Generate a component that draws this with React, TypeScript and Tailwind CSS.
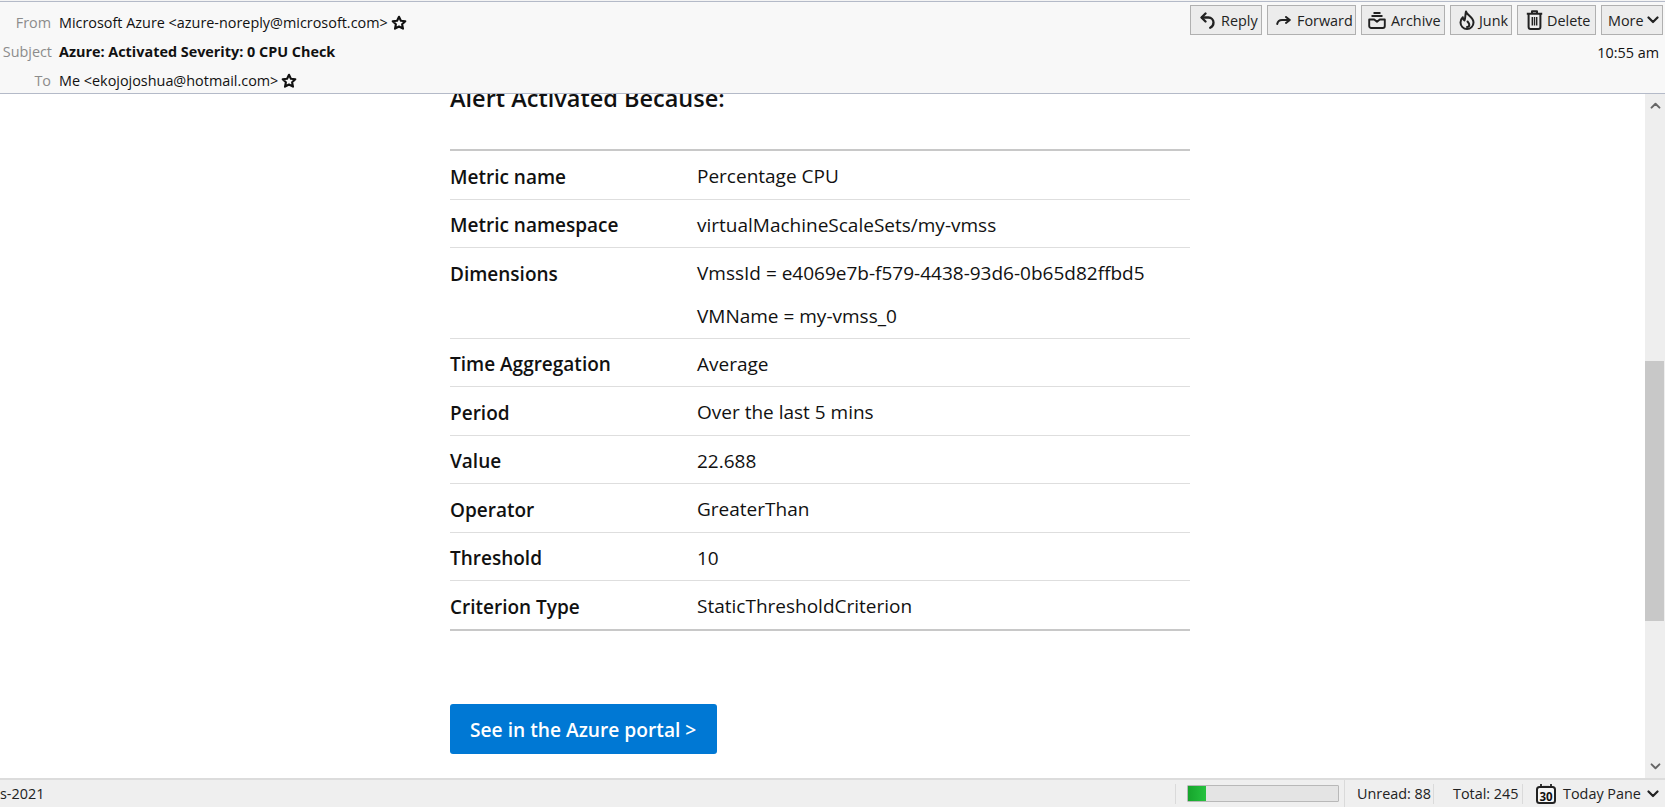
import type { ReactNode } from "react";

const ui = "font-['Open_Sans','Noto_Sans',sans-serif]";

function Star() {
  return (
    <svg viewBox="0 0 16 16" className="w-[16px] h-[16px] shrink-0" fill="none" stroke="#111" strokeWidth="2.1" strokeLinejoin="round">
      <path d="M8 1.800l1.900 4 4.400.5-3.200 3 .9 4.400L8 11.500l-4 2.200.9-4.400-3.200-3 4.400-.5z" />
    </svg>
  );
}

function Chevron({ up, className }: { up?: boolean; className: string }) {
  return (
    <svg viewBox="0 0 12 8" className={className} fill="none" stroke="currentColor" strokeWidth="2.200" strokeLinecap="round" strokeLinejoin="round">
      <path d={up ? "M1.500 6.500 6 2l4.500 4.500" : "M1.500 1.500 6 6l4.500-4.500"} />
    </svg>
  );
}

function ReplyIcon() {
  return (
    <svg viewBox="0 0 15 17" className="w-[15px] h-[17px]" fill="none" stroke="#222" strokeWidth="2.300" strokeLinecap="round" strokeLinejoin="round">
      <path d="M5.500 1.500 1.500 5.500l4 4" />
      <path d="M2 5.500h6.500a5 5 0 0 1 5 5c0 2.500-1.200 4.300-3.300 5.200" />
    </svg>
  );
}

function ForwardIcon() {
  return (
    <svg viewBox="0 0 15 9" className="w-[15px] h-[9px]" fill="none" stroke="#222" strokeWidth="2" strokeLinecap="round" strokeLinejoin="round">
      <path d="M10 1l3.800 3L10 7" />
      <path d="M13 4H6C3.500 4 1.700 5.500 1.200 8" />
    </svg>
  );
}

function ArchiveIcon() {
  return (
    <svg viewBox="0 0 18 17" className="w-[18px] h-[17px]" fill="none" stroke="#222" strokeWidth="1.900" strokeLinejoin="round">
      <path d="M5.500 1h7M3.500 4h11" />
      <path d="M1.200 7.500h5L9 9.800l2.800-2.300h5v6.500a2 2 0 0 1-2 2H3.200a2 2 0 0 1-2-2z" />
    </svg>
  );
}

function JunkIcon() {
  return (
    <svg viewBox="0 0 16 20" className="w-[16px] h-[20px]" fill="none" stroke="#222" strokeWidth="2" strokeLinejoin="round" strokeLinecap="round">
      <path d="M7 1.500c.5 3.500 7.500 5.500 7.500 11a6.500 6.500 0 0 1-13 0c0-2.300 1-4 2.300-5.200.1 1.500.7 2.500 1.700 3.200C6.500 8 6.200 4.500 7 1.500z" />
      <path d="M8.500 11.500c1 1.200 1.800 2.200 1.800 3.200 0 1.400-1 2.300-2.300 2.300" />
    </svg>
  );
}

function TrashIcon() {
  return (
    <svg viewBox="0 0 17 20" className="w-[17px] h-[20px]" fill="none" stroke="#222" strokeWidth="2" strokeLinejoin="round">
      <path d="M6 3V1.200h5V3M.8 3.800h15.400" />
      <path d="M2.600 4v13a2 2 0 0 0 2 2h7.800a2 2 0 0 0 2-2V4" />
      <path d="M6.300 7v8.500M8.500 7v8.500M10.700 7v8.500" strokeWidth="1.400" />
    </svg>
  );
}

function CalendarIcon() {
  return (
    <svg viewBox="0 0 20 20" className="w-[20px] h-[20px] shrink-0">
      <rect x="1" y="3" width="18" height="16" rx="2.500" fill="#f6f6f6" stroke="#222" strokeWidth="2" />
      <path d="M5 0v4M15 0v4" stroke="#222" strokeWidth="1.800" />
      <path d="M7 2.500h6" stroke="#222" strokeWidth="1.200" />
      <text x="10" y="16.500" textAnchor="middle" fontSize="11.500" fontWeight="700" fill="#111" fontFamily="Open Sans, sans-serif">30</text>
    </svg>
  );
}

function ToolButton({ icon, label, className }: { icon?: ReactNode; label: string; className: string }) {
  return (
    <button className={`h-[30px] flex items-center bg-[#ececec] border border-[#b0b0b0] text-[14.400px] leading-[30px] text-[#222] ${className}`}>
      {icon}
      <span className="mt-[1px]">{label}</span>
    </button>
  );
}

const rows: { name: string; values: string[] }[] = [
  { name: "Metric name", values: ["Percentage CPU"] },
  { name: "Metric namespace", values: ["virtualMachineScaleSets/my-vmss"] },
  { name: "Dimensions", values: ["VmssId = e4069e7b-f579-4438-93d6-0b65d82ffbd5", "VMName = my-vmss_0"] },
  { name: "Time Aggregation", values: ["Average"] },
  { name: "Period", values: ["Over the last 5 mins"] },
  { name: "Value", values: ["22.688"] },
  { name: "Operator", values: ["GreaterThan"] },
  { name: "Threshold", values: ["10"] },
  { name: "Criterion Type", values: ["StaticThresholdCriterion"] },
];

export default function App() {
  return (
    <div className={`h-[807px] w-[1665px] flex flex-col overflow-hidden bg-white text-[#111] ${ui}`}>
      {/* Message header */}
      <div className="h-[1px] shrink-0 bg-[#f4f4f4]" />
      <header className="relative z-10 h-[93px] shrink-0 bg-[#f8f8f8] border-t border-b border-[#b4bac8] flex justify-between">
        <div className="pt-[6px] text-[14.400px] leading-[29px]">
          <div className="flex items-center h-[29px]">
            <span className="w-[51px] text-right text-[#8c8c8c]">From</span>
            <span className="ml-[8px]">Microsoft Azure &lt;azure-noreply@microsoft.com&gt;</span>
            <span className="ml-[3px]"><Star /></span>
          </div>
          <div className="flex items-center h-[29px]">
            <span className="w-[52px] text-right text-[#8c8c8c]">Subject</span>
            <span className="ml-[7px] font-bold">Azure: Activated Severity: 0 CPU Check</span>
          </div>
          <div className="flex items-center h-[29px]">
            <span className="w-[51px] text-right text-[#8c8c8c]">To</span>
            <span className="ml-[8px]">Me &lt;ekojojoshua@hotmail.com&gt;</span>
            <span className="ml-[3px]"><Star /></span>
          </div>
        </div>
        <div className="flex flex-col items-end pr-[2px] pt-[3px]">
          <div className="flex gap-[5px]">
            <ToolButton icon={<ReplyIcon />} label="Reply" className="w-[72px] pl-[9px] gap-[6px]" />
            <ToolButton icon={<ForwardIcon />} label="Forward" className="w-[89px] pl-[8px] gap-[6px]" />
            <ToolButton icon={<ArchiveIcon />} label="Archive" className="w-[84px] pl-[6px] gap-[5px]" />
            <ToolButton icon={<JunkIcon />} label="Junk" className="w-[62px] pl-[8px] gap-[4px]" />
            <ToolButton icon={<TrashIcon />} label="Delete" className="w-[79px] pl-[8px] gap-[4px]" />
            <ToolButton
              icon={<Chevron className="order-last w-[12px] h-[8px] ml-[3px]" />}
              label="More"
              className="w-[62px] pl-[6px]"
            />
          </div>
          <div className="mt-[8px] mr-[4px] text-[14.400px] leading-[20px]">10:55 am</div>
        </div>
      </header>

      {/* Message body */}
      <div className="flex-1 min-h-0 flex">
        <main className="flex-1 min-w-0 overflow-hidden pl-[450px]">
          <div className="w-[740px]">
            <h2 className="mt-[-12px] h-[67px] text-[23.500px] leading-[32px] font-semibold">Alert Activated Because:</h2>
            <div className="border-t-2 border-b-2 border-[#c8c8c8] text-[19px]">
              {rows.map((row, i) => (
                <div key={row.name} className={`flex ${i < rows.length - 1 ? "border-b border-[#dedede]" : ""}`}>
                  <div className="w-[247px] shrink-0 pt-[12.500px] leading-[27px] font-semibold">{row.name}</div>
                  <div className={`pt-[12px] flex flex-col gap-[16px] leading-[27px] ${row.values.length > 1 ? "pb-[7.500px]" : "pb-[8.500px]"}`}>
                    {row.values.map((v) => (
                      <div key={v}>{v}</div>
                    ))}
                  </div>
                </div>
              ))}
            </div>
            <button className="mt-[73px] w-[267px] h-[50px] pt-[3px] rounded-[3px] bg-[#0078d4] text-white text-[19.200px] font-semibold text-left pl-[20px]">
              See in the Azure portal &gt;
            </button>
          </div>
        </main>

        {/* Scrollbar */}
        <div className="w-[20px] shrink-0 bg-[#eeeeee] flex flex-col items-center pt-[8px] pb-[8px] text-[#666]">
          <Chevron up className="w-[11px] h-[7px]" />
          <div className="w-[19px] mr-[1px] mt-[252px] h-[260px] bg-[#c8c8c8]" />
          <div className="flex-1" />
          <Chevron className="w-[11px] h-[7px]" />
        </div>
      </div>

      {/* Status bar */}
      <footer className="h-[29px] shrink-0 bg-[#efefef] border-t-2 border-[#dcdcdc] flex items-center text-[14.400px] text-[#222]">
        <span className="flex-1 min-w-0">s-2021</span>
        <div className="w-[169px] h-[20px] border-l border-[#dadada] pl-[11px] flex items-center">
          <div className="w-[152px] h-[17px] bg-[#e4e4e4] border border-[#b8b8b8] rounded-[1px]">
            <div className="w-[18px] h-full bg-gradient-to-r from-[#16a52c] to-[#26c23f]" />
          </div>
        </div>
        <div className="w-[89px] h-[27px] border-l border-[#dadada] pl-[12px] flex items-center">Unread: 88</div>
        <div className="w-[89px] h-[20px] border-l border-[#dadada] pl-[19px] flex items-center">Total: 245</div>
        <div className="w-[143px] h-[20px] border-l border-[#dadada] pl-[13px] flex items-center">
          <CalendarIcon />
          <span className="ml-[7px]">Today Pane</span>
          <Chevron className="w-[12px] h-[8px] ml-[6px]" />
        </div>
      </footer>
    </div>
  );
}
